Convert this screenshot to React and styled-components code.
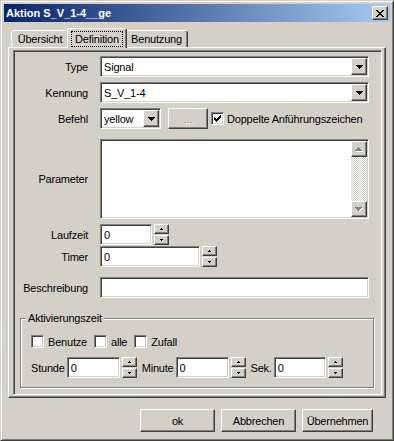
import styled, { createGlobalStyle, css } from 'styled-components';

const GlobalStyle = createGlobalStyle`
  html, body {
    margin: 0;
    padding: 0;
    background: #d4d0c8;
  }
  body {
    font-family: "Liberation Sans", Arial, sans-serif;
    font-size: 11px;
    letter-spacing: -0.2px;
    color: #000;
  }
  * {
    box-sizing: border-box;
  }
`;

const raised = css`
  border: 1px solid;
  border-color: #fff #404040 #404040 #fff;
  box-shadow: inset -1px -1px #808080;
  background: #d4d0c8;
`;

const sunken = css`
  border: 1px solid;
  border-color: #808080 #fff #fff #808080;
  box-shadow: inset 1px 1px #404040, inset -1px -1px #d4d0c8;
  background: #fff;
  padding: 1px;
`;

const Window = styled.div`
  width: 394px;
  height: 441px;
  background: #d4d0c8;
  border: 1px solid;
  border-color: #d4d0c8 #404040 #404040 #d4d0c8;
  box-shadow: inset 1px 1px #fff, inset -1px -1px #808080;
  padding: 3px;
  display: flex;
  flex-direction: column;
`;

const TitleBar = styled.div`
  flex: none;
  height: 18px;
  display: flex;
  align-items: center;
  justify-content: space-between;
  padding: 0 2px;
  background: linear-gradient(to right, #0a246a, #a6caf0);
`;

const Title = styled.div`
  color: #fff;
  font-weight: bold;
  font-size: 11px;
  letter-spacing: 0;
  white-space: nowrap;
`;

const CloseButton = styled.div`
  ${raised};
  width: 16px;
  height: 14px;
  display: flex;
  align-items: center;
  justify-content: center;
`;

const TabStrip = styled.div`
  flex: none;
  height: 19px;
  margin: 6px 0 0 7px;
  display: flex;
  align-items: flex-end;
`;

const Tab = styled.div`
  position: relative;
  width: ${(p) => p.$w}px;
  height: ${(p) => (p.$active ? 20 : 17)}px;
  margin: ${(p) => (p.$active ? '0 -2px -1px' : '0')};
  z-index: ${(p) => (p.$active ? 1 : 0)};
  background: #d4d0c8;
  border: 1px solid #fff;
  border-bottom: none;
  border-right-color: #404040;
  border-radius: 3px 3px 0 0;
  box-shadow: inset -1px 0 #808080;
  display: flex;
  align-items: center;
  justify-content: center;
  white-space: nowrap;
`;

const Focus = styled.span`
  border: 1px dotted #000;
  padding: 0 3px;
  line-height: 14px;
`;

const TabPanel = styled.div`
  flex: none;
  height: 351px;
  margin: 0 4px;
  border: 1px solid;
  border-color: #fff #404040 #404040 #fff;
  box-shadow: inset -1px -1px #808080;
  padding: 2px 3px 2px 4px;
  display: flex;
`;

const Frame = styled.div`
  flex: 1;
  border: 1px solid;
  border-color: #808080 #fff #fff #808080;
  box-shadow: inset 1px 1px #404040, inset -1px -1px #d4d0c8;
  padding: 5px 12px 0 1px;
  display: flex;
  flex-direction: column;
`;

const Row = styled.div`
  display: grid;
  grid-template-columns: 73px 1fr;
  column-gap: 12px;
  align-items: center;
  margin-top: ${(p) => p.$top || 0}px;
`;

const Label = styled.div`
  text-align: right;
  white-space: nowrap;
`;

const Line = styled.div`
  display: flex;
  align-items: center;
  gap: ${(p) => p.$gap ?? 2}px;
`;

const Caption = styled.span`
  margin-left: ${(p) => p.$left || 0}px;
  white-space: nowrap;
`;

const Combo = styled.div`
  ${sunken};
  height: 21px;
  width: ${(p) => (p.$w ? `${p.$w}px` : 'auto')};
  display: flex;
`;

const ComboText = styled.div`
  flex: 1;
  padding-left: 2px;
  display: flex;
  align-items: center;
  white-space: nowrap;
  overflow: hidden;
`;

const DropButton = styled.div`
  ${raised};
  flex: none;
  width: 16px;
  display: flex;
  align-items: center;
  justify-content: center;
`;

const SmallButton = styled.div`
  ${raised};
  width: 40px;
  height: 21px;
  margin-left: 4px;
  display: flex;
  align-items: center;
  justify-content: center;
  color: #808080;
  text-shadow: 1px 1px #fff;
`;

const CheckItem = styled.label`
  display: flex;
  align-items: center;
  gap: ${(p) => p.$gap ?? 3}px;
  white-space: nowrap;
`;

const CheckBox = styled.span`
  ${sunken};
  flex: none;
  width: 13px;
  height: 13px;
  display: flex;
  align-items: center;
  justify-content: center;
`;

const TextArea = styled.div`
  ${sunken};
  height: 80px;
  display: flex;
`;

const AreaText = styled.div`
  flex: 1;
`;

const ScrollBar = styled.div`
  width: 16px;
  display: flex;
  flex-direction: column;
`;

const ScrollButton = styled.div`
  ${raised};
  flex: none;
  height: 16px;
  display: flex;
  align-items: center;
  justify-content: center;
`;

const ScrollTrack = styled.div`
  flex: 1;
  background-image: repeating-conic-gradient(#fff 0 25%, #d4d0c8 0 50%);
  background-size: 2px 2px;
`;

const TextBox = styled.div`
  ${sunken};
  width: ${(p) => (p.$w ? `${p.$w}px` : 'auto')};
  flex: ${(p) => (p.$w ? 'none' : '1')};
  height: 21px;
  padding-left: 3px;
  display: flex;
  align-items: center;
`;

const SpinCol = styled.div`
  flex: none;
  width: 15px;
  height: 21px;
  display: flex;
  flex-direction: column;
  gap: 1px;
`;

const SpinButton = styled.div`
  ${raised};
  height: 10px;
  display: flex;
  align-items: center;
  justify-content: center;
`;

const Group = styled.fieldset`
  margin: 14px -5px 0 5px;
  padding: 10px 10px 9px 10px;
  border: 1px solid #808080;
  box-shadow: 1px 1px #fff, inset 1px 1px #fff;
  min-width: 0;
  display: flex;
  flex-direction: column;
  gap: 9px;
`;

const Legend = styled.legend`
  padding: 0 2px;
  margin-left: -5px;
  line-height: 13px;
  background: #d4d0c8;
`;

const Footer = styled.div`
  display: flex;
  justify-content: flex-end;
  gap: 6px;
  margin-top: 11px;
  padding-right: 17px;
`;

const PushButton = styled.div`
  ${raised};
  width: ${(p) => p.$w}px;
  height: 23px;
  display: flex;
  align-items: center;
  justify-content: center;
`;

const Arrow = ({ up }) => (
  <svg width="7" height="4" viewBox="0 0 7 4" shapeRendering="crispEdges">
    <path
      fill="#000"
      d={up ? 'M3 0h1v1H3zM2 1h3v1H2zM1 2h5v1H1zM0 3h7v1H0z' : 'M0 0h7v1H0zM1 1h5v1H1zM2 2h3v1H2zM3 3h1v1H3z'}
    />
  </svg>
);

const GrayArrow = ({ up }) => {
  const d = up ? 'M3 0h1v1H3zM2 1h3v1H2zM1 2h5v1H1zM0 3h7v1H0z' : 'M0 0h7v1H0zM1 1h5v1H1zM2 2h3v1H2zM3 3h1v1H3z';
  return (
    <svg width="8" height="5" viewBox="0 0 8 5" shapeRendering="crispEdges">
      <path fill="#fff" d={d} transform="translate(1 1)" />
      <path fill="#808080" d={d} />
    </svg>
  );
};

const TinyArrow = ({ up }) => (
  <svg width="3" height="2" viewBox="0 0 3 2" shapeRendering="crispEdges">
    <path fill="#000" d={up ? 'M1 0h1v1H1zM0 1h3v1H0z' : 'M0 0h3v1H0zM1 1h1v1H1z'} />
  </svg>
);

const CloseGlyph = () => (
  <svg width="8" height="7" viewBox="0 0 8 7" shapeRendering="crispEdges">
    <path
      fill="#000"
      d="M0 0h2v1H0zM6 0h2v1H6zM1 1h2v1H1zM5 1h2v1H5zM2 2h4v1H2zM3 3h2v1H3zM2 4h4v1H2zM1 5h2v1H1zM5 5h2v1H5zM0 6h2v1H0zM6 6h2v1H6z"
    />
  </svg>
);

const CheckGlyph = () => (
  <svg width="7" height="7" viewBox="0 0 7 7" shapeRendering="crispEdges">
    <path
      fill="#000"
      d="M6 0h1v1H6zM5 1h2v1H5zM0 2h1v1H0zM4 2h3v1H4zM0 3h2v1H0zM3 3h3v1H3zM0 4h5v1H0zM1 5h3v1H1zM2 6h1v1H2z"
    />
  </svg>
);

const Select = ({ value, w }) => (
  <Combo $w={w}>
    <ComboText>{value}</ComboText>
    <DropButton>
      <Arrow />
    </DropButton>
  </Combo>
);

const Spinner = ({ w }) => (
  <>
    <TextBox $w={w}>0</TextBox>
    <SpinCol>
      <SpinButton>
        <TinyArrow up />
      </SpinButton>
      <SpinButton>
        <TinyArrow />
      </SpinButton>
    </SpinCol>
  </>
);

const Check = ({ checked, children, gap }) => (
  <CheckItem $gap={gap}>
    <CheckBox>{checked && <CheckGlyph />}</CheckBox>
    {children}
  </CheckItem>
);

export default function App() {
  return (
    <>
      <GlobalStyle />
      <Window>
        <TitleBar>
          <Title>Aktion S_V_1-4__ge</Title>
          <CloseButton>
            <CloseGlyph />
          </CloseButton>
        </TitleBar>

        <TabStrip>
          <Tab $w={58}>Übersicht</Tab>
          <Tab $w={60} $active>
            <Focus>Definition</Focus>
          </Tab>
          <Tab $w={63}>Benutzung</Tab>
        </TabStrip>

        <TabPanel>
          <Frame>
            <Row>
              <Label>Type</Label>
              <Select value="Signal" />
            </Row>
            <Row $top={5}>
              <Label>Kennung</Label>
              <Select value="S_V_1-4" />
            </Row>
            <Row $top={5}>
              <Label>Befehl</Label>
              <Line $gap={3}>
                <Select value="yellow" w={61} />
                <SmallButton>...</SmallButton>
                <Check checked gap={3}>Doppelte Anführungszeichen</Check>
              </Line>
            </Row>
            <Row $top={10}>
              <Label>Parameter</Label>
              <TextArea>
                <AreaText />
                <ScrollBar>
                  <ScrollButton>
                    <GrayArrow up />
                  </ScrollButton>
                  <ScrollTrack />
                  <ScrollButton>
                    <GrayArrow />
                  </ScrollButton>
                </ScrollBar>
              </TextArea>
            </Row>
            <Row $top={5}>
              <Label>Laufzeit</Label>
              <Line>
                <Spinner w={52} />
              </Line>
            </Row>
            <Row $top={1}>
              <Label>Timer</Label>
              <Line>
                <Spinner w={100} />
              </Line>
            </Row>
            <Row $top={10}>
              <Label>Beschreibung</Label>
              <TextBox />
            </Row>

            <Group>
              <Legend>Aktivierungszeit</Legend>
              <Line $gap={7}>
                <Check gap={4}>Benutze</Check>
                <Check gap={4}>alle</Check>
                <Check gap={4}>Zufall</Check>
              </Line>
              <Line>
                <Caption>Stunde</Caption>
                <Spinner w={53} />
                <Caption $left={3}>Minute</Caption>
                <Spinner w={53} />
                <Caption $left={3}>Sek.</Caption>
                <Spinner w={52} />
              </Line>
            </Group>
          </Frame>
        </TabPanel>

        <Footer>
          <PushButton $w={75}>ok</PushButton>
          <PushButton $w={75}>Abbrechen</PushButton>
          <PushButton $w={71}>Übernehmen</PushButton>
        </Footer>
      </Window>
    </>
  );
}
